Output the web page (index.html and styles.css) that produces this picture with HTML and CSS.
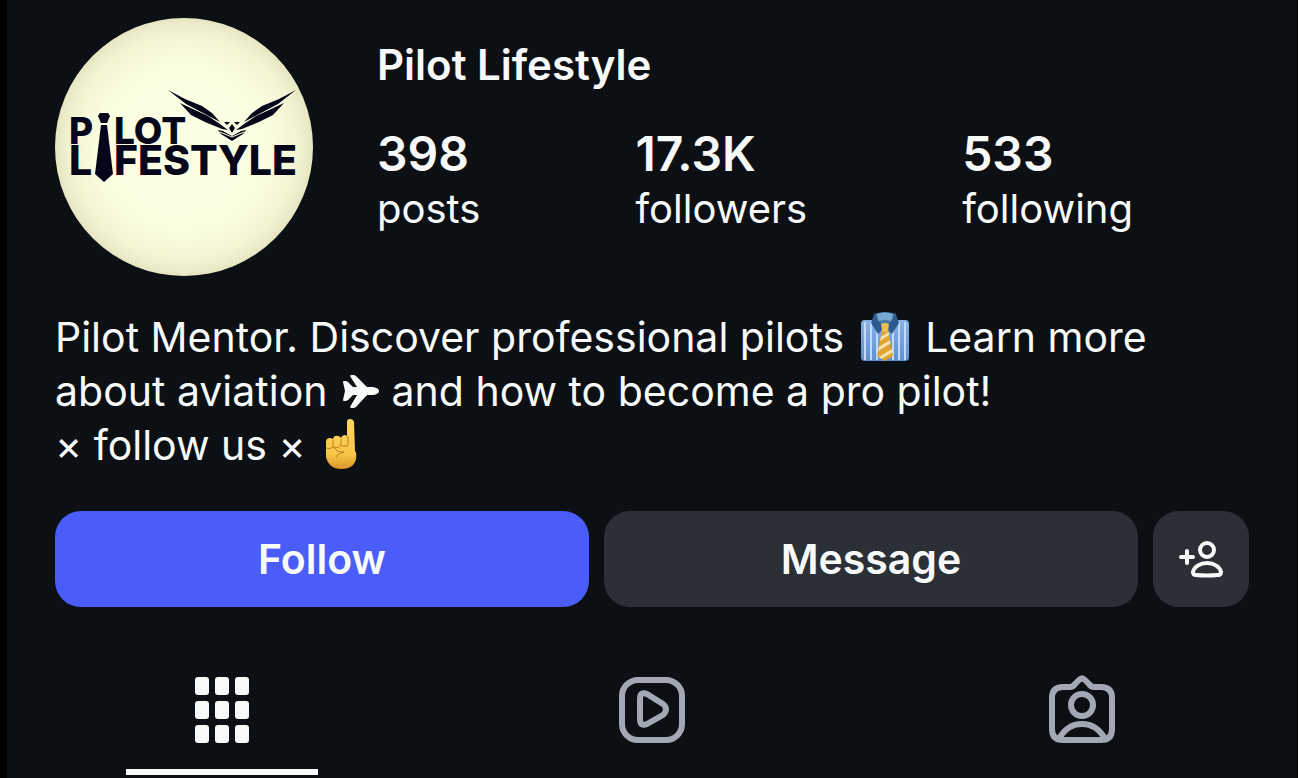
FILE: index.html
```html
<!DOCTYPE html>
<html lang="en">
<head>
    <meta charset="UTF-8">
    <meta name="viewport" content="width=device-width, initial-scale=1.0">
    <title>Pilot Lifestyle</title>
    <link rel="stylesheet" href="styles.css">
</head>
<body>

<main class="profile">
    <header class="header">
        <svg class="avatar" viewBox="0 0 258 258" role="img" aria-label="Pilot Lifestyle logo">
            <defs>
                <radialGradient id="cream">
                    <stop offset="0" stop-color="#fcffe3"/>
                    <stop offset="0.65" stop-color="#fafde0"/>
                    <stop offset="0.88" stop-color="#f3f4d3"/>
                    <stop offset="1" stop-color="#e6e6c1"/>
                </radialGradient>
            </defs>
            <circle cx="129" cy="129" r="129" fill="url(#cream)"/>
            <g class="logo-text">
                <text class="logo-top" x="14" y="126">P</text>
                <text class="logo-top" x="59" y="126">LOT</text>
                <text x="14" y="157">L</text>
                <text x="59" y="157">FESTYLE</text>
            </g>
            <!-- tie -->
            <g fill="#05061a">
                <path d="M45 95h8l2 3-3 7h-6l-3-7z"/>
                <path d="M46 107h6l6 49-9 8-9-8z"/>
            </g>
            <!-- wings -->
            <g fill="#05061a">
                <path d="M113 72L130 81 147 88 157 95 165 104 150 96 131 86z"/>
                <path d="M125 85L140 92 153 98 165 106 173 112 167 111 150 104 136 97z"/>
                <path d="M241 72L224 81 207 88 197 95 189 104 204 96 223 86z"/>
                <path d="M229 85L214 92 201 98 189 106 181 112 187 111 204 104 218 97z"/>
                <path d="M169 104h6l-3 3zM179 104h6l-3 3zM177 106l3 4-3 5-3-5z"/>
                <path d="M163 112l5 1 9 5 9-5 5-1-3 4-11 7-11-7z"/>
            </g>
            <path d="M165 114l12 5 12-5" fill="none" stroke="#fafde0"/>
        </svg>
        <div class="info">
            <h1 class="name">Pilot Lifestyle</h1>
            <ul class="stats">
                <li><strong>398</strong><span>posts</span></li>
                <li><strong>17.3K</strong><span>followers</span></li>
                <li><strong>533</strong><span>following</span></li>
            </ul>
        </div>
    </header>

    <p class="bio">
        Pilot Mentor. Discover professional pilots
        <svg class="emoji" viewBox="0 0 50 52" role="img" aria-label="shirt and tie">
            <defs>
                <linearGradient id="shirt" x2="0" y2="1">
                    <stop offset="0" stop-color="#88b3ea"/>
                    <stop offset="1" stop-color="#5f8fd2"/>
                </linearGradient>
                <clipPath id="tie"><path d="M22 19h6l1 7 4 20-8 5-8-5 4-20z"/></clipPath>
            </defs>
            <rect x="1" y="10" width="48" height="41" rx="4" fill="url(#shirt)"/>
            <path d="M5 12v38M11 12v38M17 14v36M33 14v36M39 12v38M45 12v38" stroke="#c3dafa" stroke-width="2"/>
            <path d="M15 4Q25 0 35 4L32 14 25 20 18 14z" fill="#477bad"/>
            <path d="M17 4Q25 1 33 4L31 11Q25 9 19 11z" fill="#77a9d2"/>
            <path d="M15 2L11 13 18 24 25 17 17 10zM35 2L39 13 32 24 25 17 33 10z" fill="#2d5b91"/>
            <g clip-path="url(#tie)">
                <path d="M15 15h20v37H15z" fill="#dfa52e"/>
                <path d="M17 31L33 21M15 41L35 29M15 51L35 39" stroke="#f8e3ae" stroke-width="3"/>
            </g>
            <path d="M21 14q4-2 8 0l-1 7q-3 2-6 0z" fill="#edbd50"/>
        </svg>
        Learn more about aviation
        <svg class="plane" viewBox="0 0 38 36" role="img" aria-label="airplane">
            <path d="M1 8q0-1 1-1h2l2 1 5 5h4L8 2q0-1 2-1h2l2 1 11 11h6q6 1 6 4t-6 4h-6L14 33l-2 1h-2q-2 0-2-1l7-12h-4l-5 5-2 1H2q-1 0-1-1l2-9z" fill="#f8fafa"/>
        </svg>
        and how to become a pro pilot!<br>
        × follow us ×
        <svg class="finger" viewBox="0 0 34 52" role="img" aria-label="pointing up">
            <defs>
                <linearGradient id="skin" x2="0" y2="1">
                    <stop offset="0" stop-color="#ffd765"/>
                    <stop offset="0.7" stop-color="#f7c647"/>
                    <stop offset="1" stop-color="#dc9528"/>
                </linearGradient>
            </defs>
            <path d="M23 4q0-3 3-3t4 3l1 29q2 2 1 8-2 10-15 10Q5 51 2 39V24q0-4 4-4 1 0 3 1 1-4 5-3 2 0 3 2 1-3 4-3l2 1z" fill="url(#skin)"/>
            <path d="M9 22v7q-3 3-7 1M17 21v6q-3 4-8 2M24 18v9M17 28h7M11 30q1 4 9 4-6 1-8 5" fill="none" stroke="#c27b20" stroke-width="1"/>
        </svg>
    </p>

    <div class="actions">
        <button class="btn follow" type="button">Follow</button>
        <button class="btn message" type="button">Message</button>
        <button class="btn suggest" type="button" aria-label="Similar accounts">
            <svg width="46" height="38" viewBox="0 0 46 38" fill="none" stroke="#f8fafa" stroke-width="4" stroke-linecap="round" stroke-linejoin="round">
                <path d="M3 17h12M9 11v12"/>
                <circle cx="29" cy="10" r="7"/>
                <path d="M15 32C16 27 22 23 29 23s13 4 14 9q0 3-3 3-11 1-22 0-3 0-3-3z"/>
            </svg>
        </button>
    </div>

    <nav class="tabs">
        <a class="tab active" href="#posts" aria-label="Posts">
            <svg width="66" height="72" viewBox="0 0 66 72" fill="#f8fafa">
                <rect x="6" y="3" width="14" height="18" rx="3"/>
                <rect x="26" y="3" width="14" height="18" rx="3"/>
                <rect x="46" y="3" width="14" height="18" rx="3"/>
                <rect x="6" y="27" width="14" height="18" rx="3"/>
                <rect x="26" y="27" width="14" height="18" rx="3"/>
                <rect x="46" y="27" width="14" height="18" rx="3"/>
                <rect x="6" y="51" width="14" height="18" rx="3"/>
                <rect x="26" y="51" width="14" height="18" rx="3"/>
                <rect x="46" y="51" width="14" height="18" rx="3"/>
            </svg>
        </a>
        <a class="tab" href="#reels" aria-label="Reels">
            <svg width="66" height="72" viewBox="0 0 66 72" fill="none" stroke="#a2a9b5" stroke-width="6" stroke-linejoin="round">
                <rect x="3" y="6" width="60" height="60" rx="16"/>
                <path d="M21 25q0-8 7-5l16 10q6 5 0 11L28 50q-7 3-7-5z"/>
            </svg>
        </a>
        <a class="tab" href="#tagged" aria-label="Tagged">
            <svg width="66" height="72" viewBox="0 0 66 72" fill="none" stroke="#a2a9b5" stroke-width="6" stroke-linejoin="round">
                <path d="M14 13h7q3 0 5-3l4-4q3-3 6 0l4 4q2 3 5 3h7q11 0 11 11v31q0 11-11 11H14Q3 66 3 55V24q0-11 11-11z"/>
                <circle cx="33" cy="31" r="11"/>
                <path d="M10 65Q18 50 33 50t23 15"/>
            </svg>
        </a>
    </nav>
</main>

</body>
</html>
```
FILE: styles.css
```css
* {
    box-sizing: border-box;
}
body {
    margin: 0;
    background-color: #000;
    color: #f8fafa;
    font-family: Inter, "Liberation Sans", sans-serif;
    font-size: 41px;
}
.profile {
    min-height: 100vh;
    margin: 0 1px 0 7px;
    padding-top: 18px;
    background-color: #0c1014;
    display: flex;
    flex-direction: column;
}
.header {
    display: flex;
    gap: 64px;
    padding: 0 48px;
}
.avatar {
    width: 258px;
    height: 258px;
    flex-shrink: 0;
}
.logo-text {
    font-family: Inter, sans-serif;
    font-size: 41px;
    font-weight: 800;
    fill: #05061a;
}
.logo-top {
    font-size: 37px;
}
.info {
    padding-top: 22px;
}
.name {
    margin: 0 0 36px;
    font-size: 42px;
    font-weight: 600;
    line-height: 50px;
}
.stats {
    display: flex;
    gap: 155px;
    margin: 0;
    padding: 0;
    list-style: none;
}
.stats li {
    display: flex;
    flex-direction: column;
}
.stats strong {
    font-size: 48px;
    font-weight: 600;
    line-height: 56px;
}
.stats span {
    font-size: 40px;
    line-height: 54px;
}
.bio {
    margin: 34px 0 0;
    padding: 0 48px;
    line-height: 54px;
}
.bio svg {
    vertical-align: middle;
}
.emoji {
    width: 50px;
    height: 52px;
    margin: -10px 4px 0;
}
.plane {
    width: 38px;
    height: 36px;
    margin: -6px 0 0 3px;
}
.finger {
    width: 34px;
    height: 52px;
    margin: -10px 0 0 7px;
}
.actions {
    display: flex;
    gap: 15px;
    margin-top: 39px;
    padding: 0 48px;
}
.btn {
    flex: 1;
    height: 96px;
    padding: 0;
    border: none;
    border-radius: 26px;
    background-color: #2b3036;
    color: #f8fafa;
    font-family: inherit;
    font-size: 41px;
    font-weight: 600;
    cursor: pointer;
}
.btn.follow {
    background-color: #4a5df9;
}
.btn.suggest {
    flex: 0 0 96px;
    display: flex;
    align-items: center;
    justify-content: center;
}
.tabs {
    display: flex;
    margin-top: 67px;
}
.tab {
    flex: 1;
    display: flex;
    flex-direction: column;
    align-items: center;
    height: 101px;
}
.tab.active::after {
    content: "";
    width: 192px;
    height: 6px;
    margin-top: auto;
    background-color: #f8fafa;
}
```
